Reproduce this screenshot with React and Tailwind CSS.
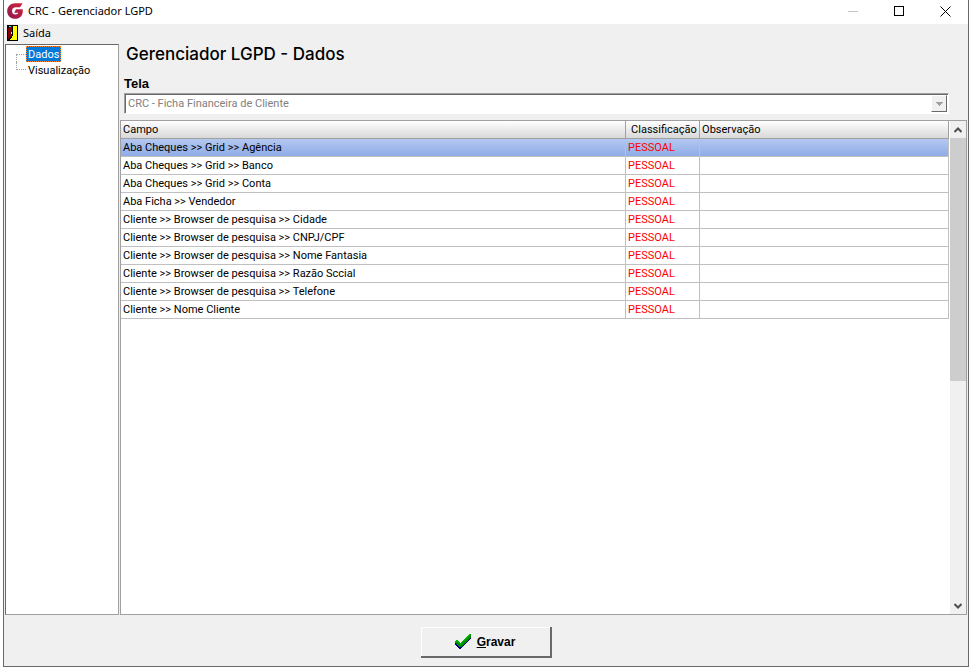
import { useState } from 'react';

const rows = [
  'Aba Cheques >> Grid >> Agência',
  'Aba Cheques >> Grid >> Banco',
  'Aba Cheques >> Grid >> Conta',
  'Aba Ficha >> Vendedor',
  'Cliente >> Browser de pesquisa >> Cidade',
  'Cliente >> Browser de pesquisa >> CNPJ/CPF',
  'Cliente >> Browser de pesquisa >> Nome Fantasia',
  'Cliente >> Browser de pesquisa >> Razão Sccial',
  'Cliente >> Browser de pesquisa >> Telefone',
  'Cliente >> Nome Cliente'
];

const LogoIcon = () => (
  <svg width="16" height="16" viewBox="0 0 16 16" aria-hidden="true">
    <defs>
      <linearGradient id="logo" x1="0" y1="1" x2="1" y2="0">
        <stop offset="0" stopColor="#8c1a50" />
        <stop offset="1" stopColor="#d3243c" />
      </linearGradient>
    </defs>
    <path
      d="M15.6 0.3 L13 4.2 H9 C6.4 4.2 5 5.8 5 8 C5 10 6.2 11.4 8.4 11.4 C10 11.4 11 10.8 11.2 9.8 H7.2 L9 6.2 H15.8 V8 C15.8 12.8 12.8 15.8 8.2 15.8 C3.4 15.8 0.2 12.6 0.2 8.2 C0.2 3.6 3.4 0.3 8.4 0.3 Z"
      fill="url(#logo)"
    />
  </svg>
);

const DoorIcon = () => (
  <svg width="11" height="16" viewBox="0 0 11 16" shapeRendering="crispEdges" aria-hidden="true">
    <rect width="11" height="16" fill="#000" />
    <rect x="1" y="1" width="9" height="14" fill="#ff0" />
    <path d="M1 1 H6 V11 H5 V13 H4 V14 H3 V15 H1 Z" fill="#000" />
    <path d="M1 3 H2 V2 H5 V11 H4 V12 H3 V13 H2 V14 H1 Z" fill="#800000" />
    <path d="M2 1 H4 V2 H2 Z" fill="#0ff" />
    <rect x="4" y="7" width="1" height="2" fill="#ff0" />
  </svg>
);

const CheckIcon = () => (
  <svg width="16" height="15" viewBox="0 0 16 15" shapeRendering="crispEdges" aria-hidden="true">
    <path d="M0 7 L2 6 L5 9 L14 0 H16 V4 L6 15 H4 L0 10 Z" fill="#000080" />
    <path d="M0 7 L2 6 L5 9 L14 0 H16 V3 L6 13 H4 L0 9 Z" fill="#008a00" />
    <path d="M0 7 L2 6 L5 9 L14 0 H16 L5 11 L2 8 H0 Z" fill="#00b400" />
  </svg>
);

const Chevron = ({ down }) => (
  <svg width="8" height="6" viewBox="0 0 8 6" fill="none" stroke="#505050" strokeWidth="2" aria-hidden="true">
    <path d={down ? 'M0.5 1 L4 4.5 L7.5 1' : 'M0.5 5 L4 1.5 L7.5 5'} />
  </svg>
);

const TitleBar = () => (
  <header className="flex h-6 shrink-0 items-start bg-white pt-[3px] pr-[17px] pl-[3px]">
    <LogoIcon />
    <h1 className="ml-[5px] flex-1 font-['Noto_Sans',sans-serif] text-[11px] leading-4">CRC - Gerenciador LGPD</h1>
    <div className="flex h-4 items-center gap-[35px]">
      <button type="button" aria-label="Minimizar" disabled>
        <svg width="11" height="11" stroke="#c4c4c4"><path d="M0 5.5 H10" /></svg>
      </button>
      <button type="button" aria-label="Maximizar">
        <svg width="11" height="11" fill="none" stroke="#000"><rect x="0.5" y="0.5" width="9" height="9" /></svg>
      </button>
      <button type="button" aria-label="Fechar">
        <svg width="11" height="11" stroke="#000"><path d="M0.5 0.5 L10.5 10.5 M10.5 0.5 L0.5 10.5" /></svg>
      </button>
    </div>
  </header>
);

const Tree = ({ active, onSelect }) => (
  <nav className="w-[114px] shrink-0 border border-[#a0a0a0] border-t-[#696969] border-l-[#696969] bg-white pt-px pl-[10px]">
    <ul>
      {['Dados', 'Visualização'].map((item, i) => (
        <li key={item} className="flex h-4">
          <span className={`w-[10px] border-l border-dotted border-[#a0a0a0] ${i ? 'h-2 border-b' : 'mt-2 border-t'}`} />
          <button
            type="button"
            onClick={() => onSelect(item)}
            className={`h-4 border px-px leading-4 ${
              active === item ? 'border-dotted border-[#ff8728] bg-[#0078d7] text-white' : 'border-transparent'
            }`}
          >
            {item}
          </button>
        </li>
      ))}
    </ul>
  </nav>
);

const Grid = () => {
  const [selected, setSelected] = useState(0);
  const th =
    'h-[18px] border-r border-b border-[#a0a0a0] bg-linear-to-b from-white to-[#d8d8d8] p-0 pl-[2px] text-left font-normal';
  const td = 'h-[18px] border-r border-b border-[#c0c0c0] p-0 pl-[2px]';

  return (
    <div className="flex min-h-0 flex-1 border border-[#a0a0a0] bg-white">
      <div className="min-w-0 flex-1">
        <table className="w-full table-fixed border-separate border-spacing-0 leading-[17px]">
          <thead>
            <tr>
              <th className={`${th} w-[61%]`}>Campo</th>
              <th className={`${th} w-[74px] pl-[5px]`}>Classificação</th>
              <th className={th}>Observação</th>
            </tr>
          </thead>
          <tbody>
            {rows.map((campo, i) => (
              <tr
                key={campo}
                onClick={() => setSelected(i)}
                className={selected === i ? 'bg-linear-to-b from-[#b4c8f0] to-[#8caae6]' : ''}
              >
                <td className={td}>{campo}</td>
                <td className={`${td} text-[#ff0000]`}>PESSOAL</td>
                <td className={td} />
              </tr>
            ))}
          </tbody>
        </table>
      </div>
      <div className="ml-px flex w-4 shrink-0 flex-col bg-[#f0f0f0]">
        <button type="button" aria-label="Rolar para cima" className="flex h-[17px] items-center justify-center">
          <Chevron />
        </button>
        <div className="flex-1">
          <div className="h-[53%] bg-[#cdcdcd]" />
        </div>
        <button type="button" aria-label="Rolar para baixo" className="flex h-[17px] items-center justify-center">
          <Chevron down />
        </button>
      </div>
    </div>
  );
};

export default function App() {
  const [page, setPage] = useState('Dados');

  return (
    <div className="h-screen bg-white pr-1 pl-[3px] font-['Roboto',sans-serif] text-[11px] text-black">
      <div className="flex h-full flex-col border border-t-0 border-[#696969] bg-[#f0f0f0]">
        <TitleBar />
        <div className="flex h-5 shrink-0 items-start pt-px pl-[3px]">
          <button type="button" className="flex items-center gap-[5px] font-['Noto_Sans',sans-serif]">
            <DoorIcon />
            Saída
          </button>
        </div>

        <div className="flex min-h-0 flex-1 gap-px px-px">
          <Tree active={page} onSelect={setPage} />
          <main className="flex min-w-0 flex-1 flex-col">
            <h2 className="pl-[6px] font-['Inter',sans-serif] text-[17px] leading-5 font-medium">
              Gerenciador LGPD - {page}
            </h2>
            <div className="mt-3 mb-[6px] pr-[18px] pl-1">
              <label htmlFor="tela" className="block font-['Liberation_Sans',Arial,sans-serif] text-[13px] leading-4 font-bold">
                Tela
              </label>
              <div className="mt-px flex h-[21px] border border-t-[#a0a0a0] border-r-white border-b-white border-l-[#a0a0a0] bg-white shadow-[inset_1px_1px_0_#696969]">
                <select id="tela" disabled className="min-w-0 flex-1 appearance-none bg-transparent pt-[2px] pl-[3px] text-[#808080] opacity-100">
                  <option>CRC - Ficha Financeira de Cliente</option>
                </select>
                <span className="my-px mr-px flex w-4 items-center justify-center border border-t-white border-r-[#696969] border-b-[#696969] border-l-white bg-[#f0f0f0]">
                  <svg width="7" height="4" fill="#a0a0a0" shapeRendering="crispEdges"><path d="M0 0 H7 L3.5 4 Z" /></svg>
                </span>
              </div>
            </div>
            <Grid />
          </main>
        </div>

        <footer className="flex h-[51px] shrink-0 items-start justify-center pt-3">
          <button
            type="button"
            className="flex h-[31px] w-[131px] items-center justify-center gap-[6px] border-r-2 border-b-2 border-r-[#696969] border-b-[#696969] font-['Liberation_Sans',Arial,sans-serif] text-[12px] font-bold shadow-[inset_1px_1px_0_#ffffff]"
          >
            <CheckIcon />
            <span><u>G</u>ravar</span>
          </button>
        </footer>
      </div>
    </div>
  );
}
